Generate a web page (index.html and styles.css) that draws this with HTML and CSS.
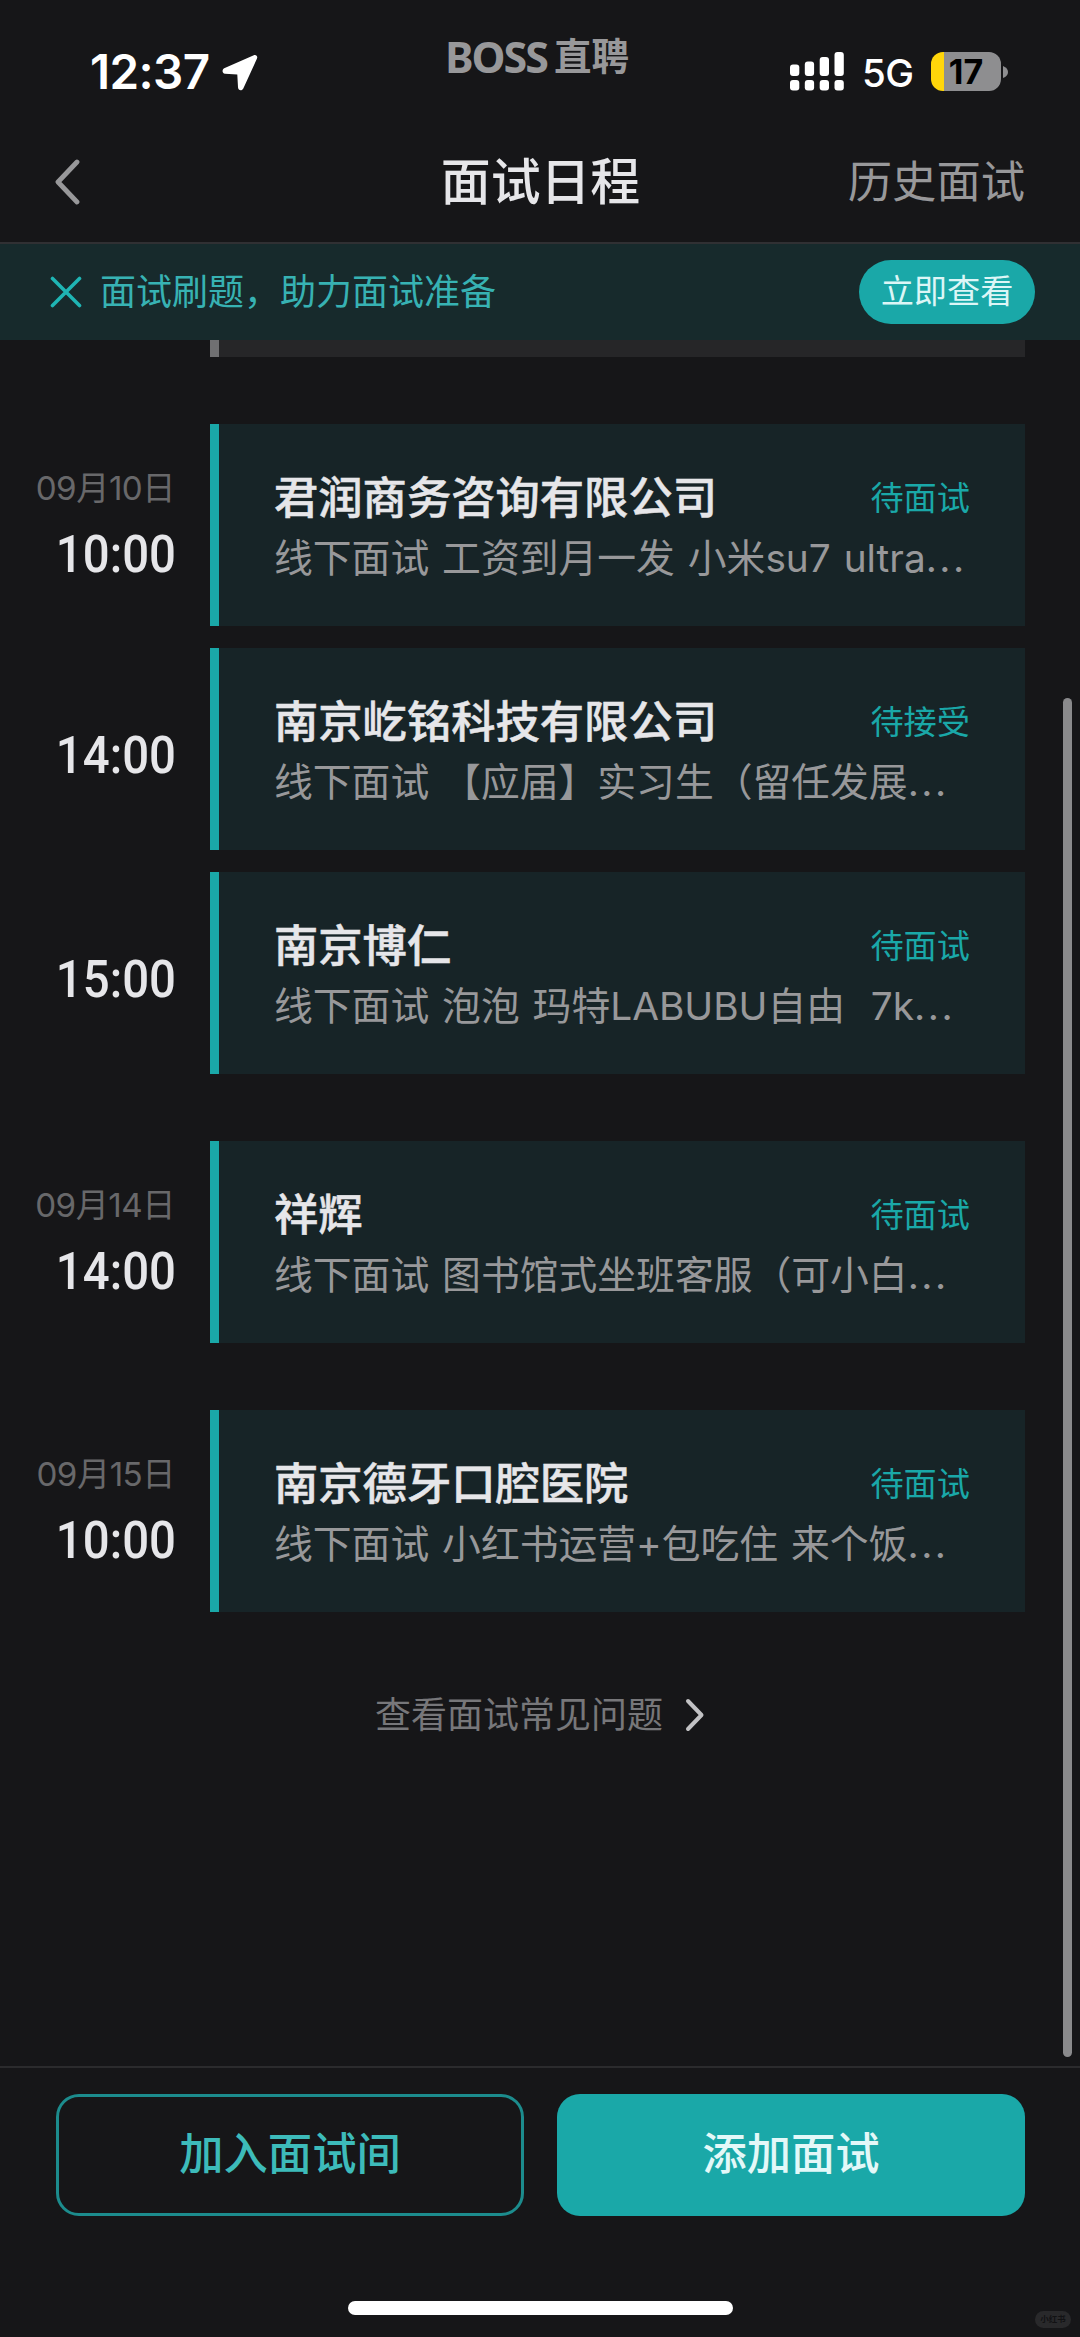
FILE: index.html
```html
<!DOCTYPE html>
<html lang="zh-CN">
<head>
<meta charset="utf-8">
<title>面试日程</title>
<link rel="stylesheet" href="styles.css">
</head>
<body>
<div class="screen">
  <div class="status-bar">
    <div class="clock">
      <span class="clock-time">12:37</span>
      <svg class="location" viewBox="0 0 36 37"><path d="M31.8 1.2 2.2 14.3C-.2 15.4 0 19.6 3 19.7L15.300 20.400 16 33.200C16.100 36.700 20 37.200 21.300 34.400L35 4.500C36 2.200 34 .2 31.800 1.200Z" fill="#fff"/></svg>
    </div>
    <div class="brand"><span class="brand-latin">BOSS</span><span class="brand-cn">直聘</span></div>
    <div class="indicators">
      <svg class="signal" viewBox="0 0 54 39" fill="#fff">
        <rect x="0" y="12.500" width="9.300" height="11.500" rx="3"/><rect x="14.800" y="9.500" width="9.300" height="14.500" rx="3"/><rect x="29.700" y="5" width="9.300" height="19" rx="3"/><rect x="44.500" y="0" width="9.300" height="24" rx="3"/>
        <rect x="0" y="28" width="9.300" height="10.500" rx="3"/><rect x="14.800" y="28" width="9.300" height="10.500" rx="3"/><rect x="29.700" y="28" width="9.300" height="10.500" rx="3"/><rect x="44.500" y="28" width="9.300" height="10.500" rx="3"/>
      </svg>
      <span class="network">5G</span>
      <div class="battery"><span>17</span></div>
      <svg class="battery-cap" viewBox="0 0 5 12"><path d="M0 0Q5 2 5 6T0 12Z" fill="#8e8e90"/></svg>
    </div>
  </div>

  <header class="nav">
    <svg class="back" viewBox="0 0 26 46"><path d="M23 3 4 23 23 43" fill="none" stroke="#98989a" stroke-width="4.800" stroke-linecap="round" stroke-linejoin="round"/></svg>
    <h1>面试日程</h1>
    <a class="history">历史面试</a>
  </header>

  <div class="banner">
    <svg class="close" viewBox="0 0 32 32"><path d="M2.500 2.500 29.500 29.500M29.500 2.500 2.500 29.500" stroke="#1fb5b4" stroke-width="3.600" stroke-linecap="round"/></svg>
    <span class="banner-text">面试刷题，助力面试准备</span>
    <a class="pill">立即查看</a>
  </div>

  <main class="schedule">
    <div class="row past"><div class="when"></div><div class="card ended"></div></div>

    <section class="day">
      <div class="row">
        <div class="when"><span class="date">09月10日</span><span class="time">10:00</span></div>
        <div class="card"><div class="top"><h2>君润商务咨询有限公司</h2><span class="state">待面试</span></div><p>线下面试 工资到月一发 小米su7 ultra<i class="dots">...</i></p></div>
      </div>
      <div class="row">
        <div class="when"><span class="time">14:00</span></div>
        <div class="card"><div class="top"><h2>南京屹铭科技有限公司</h2><span class="state">待接受</span></div><p>线下面试 【应届】实习生（留任发展<i class="dots">...</i></p></div>
      </div>
      <div class="row">
        <div class="when"><span class="time">15:00</span></div>
        <div class="card"><div class="top"><h2>南京博仁</h2><span class="state">待面试</span></div><p>线下面试 泡泡 玛特LABUBU自由&nbsp; 7k<i class="dots">...</i></p></div>
      </div>
    </section>

    <section class="day">
      <div class="row">
        <div class="when"><span class="date">09月14日</span><span class="time">14:00</span></div>
        <div class="card"><div class="top"><h2>祥辉</h2><span class="state">待面试</span></div><p>线下面试 图书馆式坐班客服（可小白<i class="dots">...</i></p></div>
      </div>
    </section>

    <section class="day">
      <div class="row">
        <div class="when"><span class="date">09月15日</span><span class="time">10:00</span></div>
        <div class="card"><div class="top"><h2>南京德牙口腔医院</h2><span class="state">待面试</span></div><p>线下面试 小红书运营+包吃住 来个饭<i class="dots">...</i></p></div>
      </div>
    </section>

    <a class="faq">查看面试常见问题<svg viewBox="0 0 20 34"><path d="M3 3 16.500 17 3 31" fill="none" stroke="#c2c2c4" stroke-width="4" stroke-linecap="round" stroke-linejoin="round"/></svg></a>
    <div class="scrollbar"></div>
  </main>

  <footer class="actions">
    <a class="button outline">加入面试间</a>
    <a class="button solid">添加面试</a>
  </footer>
  <div class="home-indicator"></div>
  <div class="watermark">小红书</div>
</div>
</body>
</html>
```
FILE: styles.css
```css
* { box-sizing: border-box; margin: 0; padding: 0; }

body {
  background: #161618;
  color: #e6e6e9;
  font-family: Inter, "Noto Sans CJK SC", sans-serif;
}

.screen {
  position: relative;
  display: flex;
  flex-direction: column;
  width: 1080px;
  height: 2337px;
  overflow: hidden;
}

.status-bar {
  display: grid;
  grid-template-columns: 448px 182px 1fr;
  height: 122px;
  color: #fff;
}

.clock { display: flex; gap: 13px; padding: 54px 0 0 90px; }
.clock-time { width: 119px; font-size: 47.5px; font-weight: 600; line-height: 36px; letter-spacing: -0.6px; white-space: nowrap; }
.location { width: 36px; height: 37px; }

.brand { display: flex; padding-top: 37px; color: #98989a; white-space: nowrap; }
.brand-latin { width: 109px; margin-left: -3px; font: 700 43px/40px "Noto Sans", sans-serif; letter-spacing: -2px; }
.brand-cn { font-size: 37.5px; font-weight: 700; line-height: 40px; }

.indicators { display: flex; align-items: flex-start; padding: 52px 0 0 160px; }
.signal { width: 54px; height: 39px; }
.network { width: 51px; margin-left: 18px; font-size: 38.5px; font-weight: 500; line-height: 43px; letter-spacing: -0.5px; }
.battery {
  width: 70px;
  height: 39px;
  margin-left: 18px;
  border-radius: 12px;
  background: linear-gradient(90deg, #ffd60a 13px, #8e8e90 13px);
  color: #000;
  font-size: 34px;
  font-weight: 700;
  line-height: 39px;
  text-align: center;
}
.battery-cap { width: 5px; height: 12px; margin: 14px 0 0 2px; }

.nav {
  display: grid;
  grid-template-columns: 1fr auto 1fr;
  align-items: center;
  height: 122px;
  padding: 0 55px 0 54px;
  border-bottom: 2px solid #303033;
}
.back { width: 26px; height: 46px; }
.nav h1 { padding-left: 2px; font-size: 49.85px; font-weight: 500; line-height: 62px; }
.history { justify-self: end; color: #98989a; font-size: 44.3px; line-height: 62px; }

.banner {
  display: flex;
  align-items: center;
  height: 96px;
  padding: 0 45px 0 50px;
  background: #172a2c;
}
.close { width: 32px; height: 32px; margin-right: 18px; }
.banner-text { flex: 1; color: #37b2b3; font-size: 36px; line-height: 50px; }
.pill {
  width: 176px;
  height: 64px;
  border-radius: 32px;
  background: #1aa8a8;
  color: #dcf6f6;
  font-size: 33.2px;
  line-height: 63px;
  text-align: center;
}

.schedule { position: relative; flex: 1; display: flex; flex-direction: column; }
.day { display: flex; flex-direction: column; gap: 22px; margin-bottom: 67px; }
.row { display: grid; grid-template-columns: 174px 815px; gap: 36px; height: 202px; }
.past { height: 17px; margin-bottom: 67px; }

.when { display: flex; flex-direction: column; align-items: flex-end; justify-content: center; padding-top: 13px; }
.date { height: 52px; margin: -5px -1px 0 0; color: #68686a; font-size: 33.2px; font-weight: 400; line-height: 40px; letter-spacing: -0.5px; white-space: nowrap; }
.time { font: 500 52px/70px Roboto, sans-serif; white-space: nowrap; transform: translateX(2px) scaleX(0.91); transform-origin: right center; }

.card { padding: 49px 55px 0; border-left: 9px solid #1aa8a8; background: #172427; }
.card.ended { padding: 0; border-color: #707072; background: #262628; }
.top { display: flex; align-items: center; justify-content: space-between; height: 50px; }
.card h2 { font-size: 44.3px; font-weight: 500; line-height: 48px; white-space: nowrap; -webkit-text-stroke: 0.5px currentColor; }
.state { color: #1aa8a8; font-size: 33.2px; line-height: 48px; }
.card p { height: 69px; color: #98989a; font-size: 38.8px; line-height: 69px; word-spacing: 2px; white-space: nowrap; }
.dots { font-style: normal; letter-spacing: 2.500px; }

.faq { display: flex; align-items: center; align-self: center; gap: 22px; height: 60px; margin: 6px 0 0; color: #77777a; font-size: 36px; line-height: 60px; }
.faq svg { width: 20px; height: 34px; }

.scrollbar { position: absolute; top: 358px; right: 8px; width: 9px; height: 1359px; border-radius: 5px; background: #8a8a8c; }

.actions {
  display: grid;
  grid-template-columns: 1fr 1fr;
  gap: 33px;
  height: 235px;
  padding: 26px 55px 0 56px;
  border-top: 2px solid #2b2b2d;
}
.button { height: 122px; border-radius: 23px; font-size: 44.3px; font-weight: 500; line-height: 121px; text-align: center; }
.outline { border: 3px solid #1c8c8d; color: #3dbbba; line-height: 115px; }
.solid { background: #1aa8a8; color: #e3f8f8; }

.home-indicator { width: 385px; height: 14px; margin: 0 0 22px 348px; border-radius: 7px; background: #fff; }
.watermark {
  position: absolute;
  right: 9px;
  bottom: 9px;
  width: 36px;
  height: 17px;
  border-radius: 9px;
  background: #29292b;
  color: #121214;
  font-size: 8.500px;
  font-weight: 700;
  line-height: 17px;
  text-align: center;
}
```
